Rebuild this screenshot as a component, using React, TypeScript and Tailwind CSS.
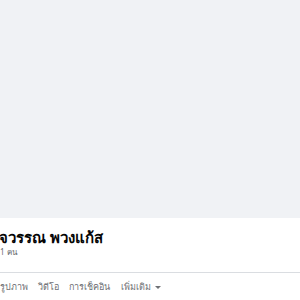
export default function App() {
  const tabs = ["รูปภาพ", "วิดีโอ", "การเช็คอิน"];
  return (
    <div className="w-[300px] h-[300px] overflow-hidden bg-white font-['Noto_Sans',sans-serif]">
      <div className="h-[218px] bg-[#f0f2f5]" />
      <div className="pt-[9px]">
        <div className="-ml-[1px] text-[15px] leading-[20px] font-bold text-[#050505] whitespace-nowrap">
          จวรรณ พวงแก้ส
        </div>
        <div className="-mt-[1px] text-[8px] leading-[12px] text-[#65676b] whitespace-nowrap">1 คน</div>
      </div>
      <div className="mt-[14px] h-px bg-[#dadde1]" />
      <div className="flex items-center gap-[10px] h-[28px] text-[9px] text-[#6f7175] whitespace-nowrap">
        {tabs.map((t) => (
          <span key={t}>{t}</span>
        ))}
        <span className="ml-[1px] flex items-center gap-[4px]">
          เพิ่มเติม
          <svg width="6" height="3" viewBox="0 0 6 3">
            <path d="M0 0h6L3 3z" fill="#6f7175" />
          </svg>
        </span>
      </div>
    </div>
  );
}
